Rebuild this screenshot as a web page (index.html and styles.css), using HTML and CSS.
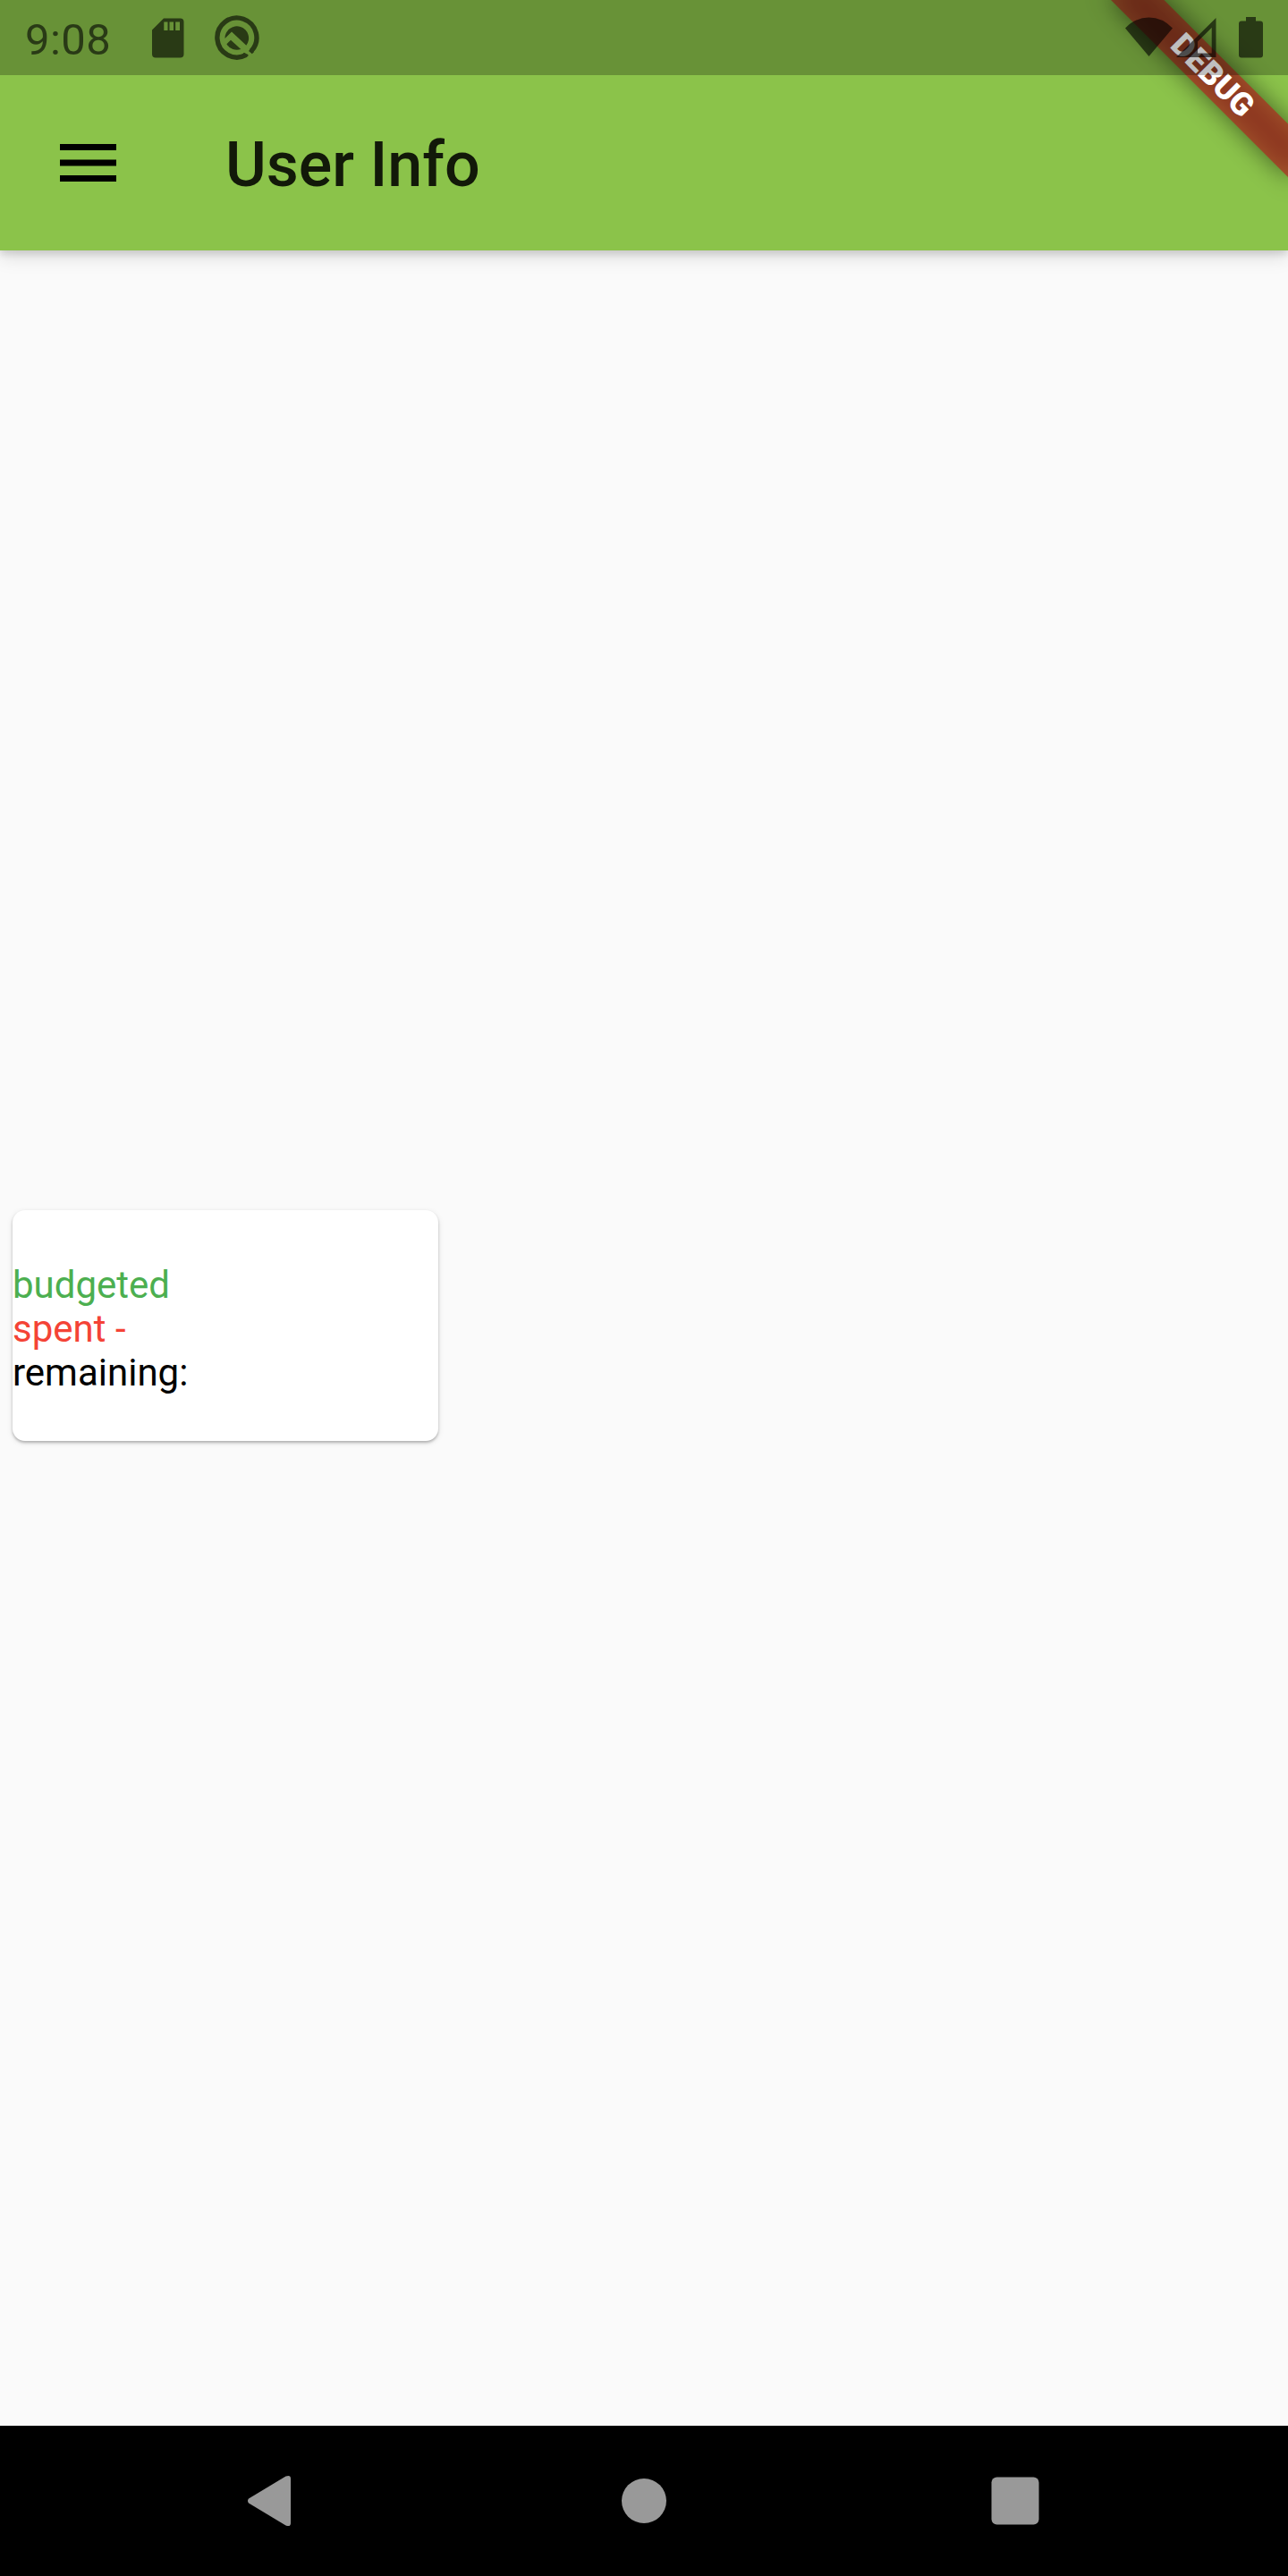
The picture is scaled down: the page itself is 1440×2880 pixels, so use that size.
FILE: index.html
```html
<!DOCTYPE html>
<html lang="en">
<head>
<meta charset="utf-8">
<title>User Info</title>
<link rel="stylesheet" href="styles.css">
</head>
<body>
<div class="screen">
  <header class="appbar">
    <div class="status">
      <span class="clock">9:08</span>
      <svg class="sd" width="36" height="45" viewBox="0 0 36 45"><path fill-rule="evenodd" d="M13 .5H31.500Q35.500 .5 35.500 4.500V40.500Q35.500 44.500 31.500 44.500H4Q0 44.500 0 40.500V13.500ZM13.300 4.500V14H17.500V4.500ZM19.500 4.500V14H24V4.500ZM26.200 4.500V14H31V4.500Z"/></svg>
      <svg class="q" width="50" height="50" viewBox="0 0 50 50">
        <path d="M35.300 44.400A22 22 0 1 1 41 40" fill="none" stroke="#000" stroke-width="5.400"/>
        <path d="M32 42L36.500 43.500L38 45L35 47L32 46ZM38 40L40 37.500L44 41L41.800 43.200Z"/>
        <path d="M11.500 26A13.300 13.300 0 1 1 35.300 33.800L19 18.500Z"/>
        <path d="M13.400 32.200L18 27.700L29.300 38A13.300 13.300 0 0 1 13.400 32.200Z"/>
      </svg>
      <span class="spacer"></span>
      <svg class="wifi" width="54" height="44" viewBox="0 0 54 44"><path d="M0 12.500Q11.500 .5 26.500 .5T53 12.500L26.500 44Z"/></svg>
      <svg class="signal" width="45" height="44" viewBox="0 0 45 44"><path fill-rule="evenodd" d="M0 44L44.500 0V44ZM24 39.500H39.700V11L24 26.500Z"/></svg>
      <svg class="battery" width="27" height="46" viewBox="0 0 27 46"><path d="M8 0H19V4.500H24Q27 4.500 27 7.500V42.500Q27 45.500 24 45.500H3Q0 45.500 0 42.500V7.500Q0 4.500 3 4.500H8Z"/></svg>
    </div>
    <div class="toolbar">
      <svg class="menu" width="63" height="42" viewBox="0 0 63 42"><path d="M0 0H63V7H0ZM0 17.500H63V24.500H0ZM0 35H63V42H0Z"/></svg>
      <h1 class="title">User Info</h1>
    </div>
    <div class="ribbon"><span class="ribbon-shadow"></span><span class="ribbon-label">DEBUG</span></div>
  </header>
  <main class="content">
    <section class="card">
      <p class="budgeted">budgeted</p>
      <p class="spent">spent -</p>
      <p>remaining:</p>
    </section>
  </main>
  <nav class="navbar">
    <svg width="168" height="84" viewBox="0 0 168 84"><path fill="#999" d="M57 39.500L98.500 14.500Q104 12.500 104 17V67Q104 71.500 98.500 69.500L57 44.500Q55 42 57 39.500Z"/></svg>
    <svg width="168" height="84" viewBox="0 0 168 84"><circle cx="84" cy="42" r="25" fill="#999"/></svg>
    <svg width="168" height="84" viewBox="0 0 168 84"><rect x="57.500" y="15.500" width="53" height="53" rx="6" fill="#999"/></svg>
  </nav>
</div>
</body>
</html>
```
FILE: styles.css
```css
body { margin: 0; font-family: Roboto, "Liberation Sans", sans-serif; }
svg { display: block; flex: none; }
.screen { width: 1440px; height: 2880px; display: flex; flex-direction: column; background: #fafafa; overflow: hidden; }
.appbar { position: relative; flex: none; height: 280px; background: #8bc34a; box-shadow: 0 4px 8px rgba(0,0,0,.12), 0 7px 20px rgba(0,0,0,.12); }
.status { position: relative; z-index: 2; height: 84px; box-sizing: border-box; padding: 0 28px; display: flex; align-items: flex-start; background: rgba(0,0,0,.25); }
.status svg { opacity: .6; }
.clock { width: 141px; font-size: 49px; line-height: 57px; padding-top: 16px; letter-spacing: .4px; color: rgba(0,0,0,.6); }
.sd { margin: 20px 34px 0 0.5px; }
.q { margin-top: 17px; }
.spacer { flex: 1; }
.wifi { margin: 19px 3px 0 0; }
.signal { margin: 20px 25px 0 0; }
.battery { margin-top: 19px; }
.toolbar { height: 196px; display: flex; align-items: center; }
.menu { margin: 0 122.500px 0 66.500px; }
.title { margin: 0; padding-top: 3px; font-size: 70px; line-height: 82px; font-weight: 500; color: rgba(0,0,0,.87); }
.ribbon { position: absolute; z-index: 1; top: 0; right: 0; width: 280px; height: 280px; overflow: hidden; }
.ribbon-shadow, .ribbon-label { position: absolute; left: 140px; top: 98px; width: 280px; height: 42px; transform-origin: 140px -98px; transform: rotate(45deg); }
.ribbon-shadow { background: rgba(0,0,0,.5); filter: blur(13.900px); }
.ribbon-label { background: rgba(183,28,28,.627); color: #fff; font-size: 35.700px; line-height: 42px; font-weight: 900; text-align: center; }
.content { flex: 1; display: flex; align-items: flex-start; padding: 1073px 14px 0; }
.card { width: 476px; height: 258px; box-sizing: border-box; padding-top: 59px; border-radius: 14px; background: #fff; box-shadow: 0 2px 3px rgba(0,0,0,.24), 0 2px 7px rgba(0,0,0,.1); }
.card p { margin: 0; font-size: 42px; line-height: 49px; color: #000; }
.card .budgeted { color: #4caf50; }
.card .spent { color: #f44336; }
.navbar { flex: none; height: 168px; display: flex; align-items: center; justify-content: center; gap: 247px; background: #000; }
```
